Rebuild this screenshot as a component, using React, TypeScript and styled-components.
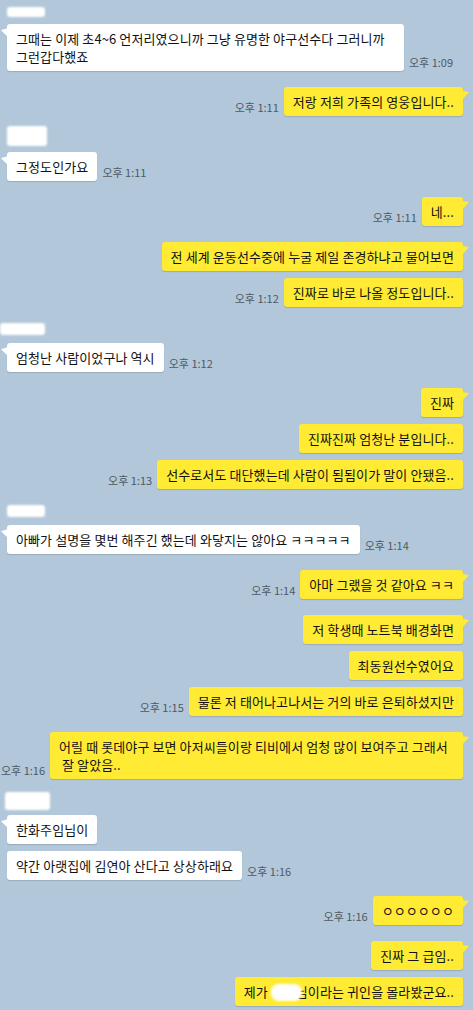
import React from "react";
import styled, { createGlobalStyle, css } from "styled-components";

type Side = "in" | "out";

interface Msg {
  text: React.ReactNode;
  time?: string;
  width?: number;
}

interface Group {
  side: Side;
  name?: { x: number; y: number; w: number; h: number };
  messages: Msg[];
}

const Redact = styled.span`
  display: inline-block;
  position: relative;
  z-index: 1;
  width: 31px;
  height: 17px;
  margin-right: -6px;
  vertical-align: -4px;
  background: #fff;
  border-radius: 8px;
  filter: blur(1.2px);
`;

const groups: Group[] = [
  {
    side: "in",
    name: { x: 0, y: 3, w: 38, h: 10 },
    messages: [
      {
        text: "그때는 이제 초4~6 언저리였으니까 그냥 유명한 야구선수다 그러니까\n그런갑다했죠",
        time: "오후 1:09",
        width: 397,
      },
    ],
  },
  { side: "out", messages: [{ text: "저랑 저희 가족의 영웅입니다..", time: "오후 1:11" }] },
  {
    side: "in",
    name: { x: 0, y: -6, w: 40, h: 20 },
    messages: [{ text: "그정도인가요", time: "오후 1:11" }],
  },
  { side: "out", messages: [{ text: "네...", time: "오후 1:11" }] },
  {
    side: "out",
    messages: [
      { text: "전 세계 운동선수중에 누굴 제일 존경하냐고 물어보면" },
      { text: "진짜로 바로 나올 정도입니다..", time: "오후 1:12" },
    ],
  },
  {
    side: "in",
    name: { x: -7, y: 0, w: 45, h: 12 },
    messages: [{ text: "엄청난 사람이었구나 역시", time: "오후 1:12" }],
  },
  {
    side: "out",
    messages: [
      { text: "진짜" },
      { text: "진짜진짜 엄청난 분입니다.." },
      { text: "선수로서도 대단했는데 사람이 됨됨이가 말이 안됐음..", time: "오후 1:13" },
    ],
  },
  {
    side: "in",
    name: { x: 0, y: 0, w: 38, h: 12 },
    messages: [{ text: "아빠가 설명을 몇번 해주긴 했는데 와닿지는 않아요 ㅋㅋㅋㅋㅋ", time: "오후 1:14" }],
  },
  { side: "out", messages: [{ text: "아마 그랬을 것 같아요 ㅋㅋ", time: "오후 1:14" }] },
  {
    side: "out",
    messages: [
      { text: "저 학생때 노트북 배경화면" },
      { text: "최동원선수였어요" },
      { text: "물론 저 태어나고나서는 거의 바로 은퇴하셨지만", time: "오후 1:15" },
    ],
  },
  {
    side: "out",
    messages: [
      {
        text: "어릴 때 롯데야구 보면 아저씨들이랑 티비에서 엄청 많이 보여주고 그래서\n 잘 알았음..",
        time: "오후 1:16",
        width: 413,
      },
    ],
  },
  {
    side: "in",
    name: { x: -2, y: -3, w: 45, h: 18 },
    messages: [
      { text: "한화주임님이" },
      { text: "약간 아랫집에 김연아 산다고 상상하래요", time: "오후 1:16" },
    ],
  },
  { side: "out", messages: [{ text: "ㅇㅇㅇㅇㅇㅇ", time: "오후 1:16" }] },
  {
    side: "out",
    messages: [
      { text: "진짜 그 급임.." },
      {
        text: (
          <>
            제가 <Redact />님이라는 귀인을 몰라봤군요..
          </>
        ),
      },
    ],
  },
];

const App = () => {
  return (
    <>
      <GlobalStyle />
      <Chat>
        {groups.map((g, gi) => (
          <GroupBox key={gi} $side={g.side}>
            {g.name && (
              <NameRow>
                <NameBlob $x={g.name.x} $y={g.name.y} $w={g.name.w} $h={g.name.h} />
              </NameRow>
            )}
            {g.messages.map((m, mi) => (
              <Row key={mi} $side={g.side}>
                <Bubble $side={g.side} $tail={mi === 0} $width={m.width}>
                  {m.text}
                </Bubble>
                {m.time && <Time>{m.time}</Time>}
              </Row>
            ))}
          </GroupBox>
        ))}
      </Chat>
    </>
  );
};

export default App;

const GlobalStyle = createGlobalStyle`
  html, body {
    margin: 0;
    padding: 0;
    background: #b2c7d9;
  }
  body {
    font-family: "Noto Sans CJK KR", "Noto Sans", sans-serif;
  }
`;

const Chat = styled.div`
  width: 473px;
  height: 1010px;
  box-sizing: border-box;
  padding-top: 4px;
  display: flex;
  flex-direction: column;
  gap: 16px;
  overflow: hidden;
  background: #b2c7d9;
`;

const GroupBox = styled.div<{ $side: Side }>`
  display: flex;
  flex-direction: column;
  gap: 7px;
  align-items: ${(p) => (p.$side === "in" ? "flex-start" : "flex-end")};
  padding: ${(p) => (p.$side === "in" ? "0 0 0 7px" : "0 10px 0 0")};
`;

const NameRow = styled.div`
  height: 13px;
`;

const NameBlob = styled.div<{ $x: number; $y: number; $w: number; $h: number }>`
  width: ${(p) => p.$w}px;
  height: ${(p) => p.$h}px;
  margin-left: ${(p) => p.$x}px;
  margin-top: ${(p) => p.$y}px;
  background: #fff;
  border-radius: 3px;
  filter: blur(0.8px);
`;

const Row = styled.div<{ $side: Side }>`
  display: flex;
  flex-direction: ${(p) => (p.$side === "in" ? "row" : "row-reverse")};
  align-items: flex-end;
  gap: 5px;
`;

const Bubble = styled.div<{ $side: Side; $tail: boolean; $width?: number }>`
  position: relative;
  box-sizing: border-box;
  ${(p) => p.$width && `width: ${p.$width}px;`}
  padding: 6px 9px 5px 9px;
  border-radius: 3px;
  background: ${(p) => (p.$side === "in" ? "#ffffff" : "#ffeb33")};
  box-shadow: 0 1px 1px rgba(0, 0, 0, 0.14);
  color: #111;
  font-size: 13px;
  letter-spacing: 0.1px;
  line-height: 18px;
  white-space: pre;
  ${(p) =>
    p.$tail &&
    css`
      &::before {
        content: "";
        position: absolute;
        top: 4px;
        width: 7px;
        height: 9px;
        background: ${p.$side === "in" ? "#ffffff" : "#ffeb33"};
        ${p.$side === "in"
          ? css`
              left: -6px;
              clip-path: polygon(100% 0, 0 25%, 100% 100%);
            `
          : css`
              right: -6px;
              clip-path: polygon(0 0, 100% 12%, 0 100%);
            `}
      }
    `}
`;

const Time = styled.span`
  flex-shrink: 0;
  margin-bottom: 2px;
  color: #4e5964;
  font-size: 11px;
  line-height: 14px;
  white-space: nowrap;
`;
